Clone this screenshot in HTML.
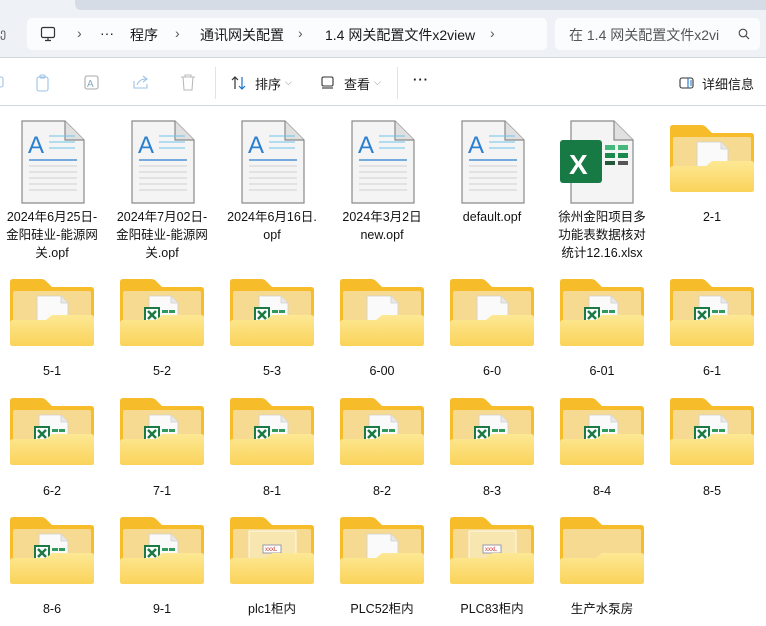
<!DOCTYPE html>
<html><head><meta charset="utf-8"><style>
*{margin:0;padding:0;box-sizing:border-box}
body{width:766px;height:626px;overflow:hidden;background:#fff;font-family:"Liberation Sans","Noto Sans CJK SC",sans-serif;color:#1a1a1a;position:relative}
#top{position:absolute;left:0;top:0;width:766px;height:58px;background:#eef2f7;border-bottom:1px solid #d3d8df}
#tab{position:absolute;left:75px;top:0;width:700px;height:10px;background:#d6dce6;border-bottom-left-radius:6px}
#addr{position:absolute;left:27px;top:18px;width:520px;height:32px;background:#fbfcfd;border-radius:5px;font-size:14px}
#addr span{position:absolute;top:7px}
#search{position:absolute;left:555px;top:18px;width:205px;height:32px;background:#fbfcfd;border-radius:5px;font-size:14px;color:#555}
#tb{position:absolute;left:0;top:59px;width:766px;height:47px;background:#fff;border-bottom:1px solid #d3d8df;font-size:13px}
#tb span{position:absolute;top:15px}
.sep{position:absolute;top:8px;width:1px;height:32px;background:#e3e3e3}
.it{position:absolute;width:100px;text-align:center;font-size:12.5px;line-height:18px;color:#111}
.ic{position:absolute}
</style></head><body>
<svg width="0" height="0" style="position:absolute">
<defs>
<linearGradient id="fg" x1="0" y1="0" x2="0" y2="1"><stop offset="0" stop-color="#fde894"/><stop offset="1" stop-color="#fad35a"/></linearGradient>
<symbol id="fb" viewBox="0 0 84 68">
<path d="M3,0 H31 Q34,0 36,2 L42,8 H81 Q84,8 84,11 V64 Q84,67 81,67 H3 Q0,67 0,64 V3 Q0,0 3,0Z" fill="#f6bc2a"/>
<rect x="3" y="12" width="78" height="52" rx="2" fill="#f7da92"/>
</symbol>
<symbol id="ff" viewBox="0 0 84 68">
<path d="M0,44 Q0,41 3,41 H36 L42,36 H81 Q84,36 84,39 V64 Q84,67 81,67 H3 Q0,67 0,64Z" fill="url(#fg)"/>
</symbol>
<symbol id="pp" viewBox="0 0 84 68">
<path d="M27,17 H51 L58,24 V45 H27Z" fill="#fafafa" stroke="#cfcfcf" stroke-width="0.8"/>
<path d="M51,17 V24 H58" fill="#e8e8e8" stroke="#cfcfcf" stroke-width="0.8"/>
</symbol>
<symbol id="px" viewBox="0 0 84 68">
<path d="M29,17 H51 L58,24 V45 H29Z" fill="#fafafa" stroke="#cfcfcf" stroke-width="0.8"/>
<path d="M51,17 V24 H58" fill="#e8e8e8" stroke="#cfcfcf" stroke-width="0.8"/>
<rect x="24" y="28" width="16" height="16" fill="#1d7a45"/><rect x="26" y="30" width="12" height="12" fill="#fff"/>
<path d="M28,32 L36,40 M36,32 L28,40" stroke="#1d7a45" stroke-width="2.5"/>
<rect x="42" y="31" width="6" height="3" fill="#2e9a5c"/><rect x="49" y="31" width="6" height="3" fill="#2e9a5c"/>
</symbol>
<symbol id="doc" viewBox="0 0 64 84">
<path d="M1,1 H44 L63,20 V83 H1Z" fill="#f4f4f4" stroke="#8a8a8a" stroke-width="1.2"/>
<path d="M44,1 V20 H63" fill="#e0e0e0" stroke="#8a8a8a" stroke-width="1.2"/>
<text x="7" y="33" font-family="Liberation Sans,sans-serif" font-size="24" fill="#2a7fcf">A</text>
<path d="M28,16 H54 M28,22 H54 M28,28 H54" stroke="#6ec3ea" stroke-width="1"/>
<path d="M8,40 H56" stroke="#2a7fcf" stroke-width="1.3"/>
<path d="M8,46 H56 M8,52 H56 M8,58 H56 M8,64 H56 M8,70 H56" stroke="#d0d0d0" stroke-width="1"/>
</symbol>
</defs></svg>

<div id="top"><div id="tab"></div>
<div style="position:absolute;left:0;top:26px;font-size:12px;color:#555">ე</div>
<div id="addr">
<svg style="position:absolute;left:13px;top:8px" width="16" height="16" viewBox="0 0 16 16"><rect x="1.5" y="1.5" width="13" height="10" rx="1.5" fill="none" stroke="#333" stroke-width="1.2"/><path d="M5,14.5 H11 M8,11.5 V14.5" stroke="#333" stroke-width="1.2"/></svg>
<span style="left:50px;color:#555">›</span><span style="left:73px">···</span>
<span style="left:103px">程序</span><span style="left:148px;color:#555">›</span>
<span style="left:173px">通讯网关配置</span><span style="left:271px;color:#555">›</span>
<span style="left:298px">1.4 网关配置文件x2view</span><span style="left:463px;color:#555">›</span>
</div>
<div id="search"><span style="position:absolute;left:14px;top:7px">在 1.4 网关配置文件x2vi</span>
<svg style="position:absolute;left:183px;top:10px" width="12" height="12" viewBox="0 0 12 12"><circle cx="5" cy="5" r="3.8" fill="none" stroke="#444" stroke-width="1.1"/><path d="M8,8 L11,11" stroke="#444" stroke-width="1.2"/></svg></div>
</div>

<div id="tb">
<svg style="position:absolute;left:0;top:14px" width="200" height="20" viewBox="0 0 200 20" fill="none" stroke="#9ec3e6" stroke-width="1.1">
<rect x="-6" y="4" width="9" height="10" rx="2"/>
<rect x="37" y="4" width="11" height="14" rx="2"/><rect x="40" y="2" width="5" height="3" rx="1"/>
<rect x="85" y="3" width="13" height="13" rx="2" stroke="#aaa"/><text x="87" y="14" font-size="10" fill="#8ab" stroke="none">A</text>
<path d="M134,8 V15 H147 V11 M137,12 Q139,6 146,6 M143,3 L147,6 L143,9"/>
<path d="M181,4 H195 M185,4 V2 H191 V4 M183,4 L184,17 H192 L193,4" stroke="#bbb"/>
</svg>
<div class="sep" style="left:215px"></div>
<svg style="position:absolute;left:231px;top:17px" width="16" height="14" viewBox="0 0 16 14" fill="none" stroke-width="1.2"><path d="M4,13 V1 M1,4 L4,1 L7,4" stroke="#333"/><path d="M11,1 V13 M8,10 L11,13 L14,10" stroke="#1a73c8"/></svg>
<span style="left:255px">排序</span><span style="left:285px;color:#888;font-size:9px;top:18px">⌵</span>
<svg style="position:absolute;left:321px;top:17px" width="13" height="13" viewBox="0 0 13 13" fill="none" stroke="#333" stroke-width="1.1"><rect x="1" y="1" width="11" height="9" rx="1.5"/><path d="M1,12 H12"/></svg>
<span style="left:344px">查看</span><span style="left:374px;color:#888;font-size:9px;top:18px">⌵</span>
<div class="sep" style="left:397px"></div>
<span style="left:413px;font-weight:bold;letter-spacing:1px;top:13px">···</span>
<svg style="position:absolute;left:679px;top:18px" width="15" height="12" viewBox="0 0 15 12" fill="none" stroke-width="1.1"><rect x="1" y="1" width="13" height="10" rx="2" stroke="#333"/><path d="M9,1 V11 M11,4 H13 M11,6 H13 M11,8 H13" stroke="#1a73c8"/></svg>
<span style="left:702px">详细信息</span>
</div>

<svg class="ic" style="left:21px;top:120px" width="64" height="84"><use href="#doc"/></svg>
<svg class="ic" style="left:131px;top:120px" width="64" height="84"><use href="#doc"/></svg>
<svg class="ic" style="left:241px;top:120px" width="64" height="84"><use href="#doc"/></svg>
<svg class="ic" style="left:351px;top:120px" width="64" height="84"><use href="#doc"/></svg>
<svg class="ic" style="left:461px;top:120px" width="64" height="84"><use href="#doc"/></svg>
<svg class="ic" style="left:560px;top:120px" width="76" height="84" viewBox="0 0 76 84">
<path d="M11,1 H54 L73,20 V83 H11Z" fill="#f4f4f4" stroke="#8a8a8a" stroke-width="1.2"/><path d="M54,1 V20 H73" fill="#e0e0e0" stroke="#8a8a8a" stroke-width="1.2"/>
<rect x="0" y="20" width="42" height="43" rx="3" fill="#177a44"/>
<text x="9" y="54" font-family="Liberation Sans,sans-serif" font-weight="bold" font-size="28" fill="#fff">X</text>
<rect x="45" y="25" width="10" height="5" fill="#45b97c"/><rect x="58" y="25" width="10" height="5" fill="#45b97c"/>
<rect x="45" y="33" width="10" height="5" fill="#1a8a4c"/><rect x="58" y="33" width="10" height="5" fill="#1a8a4c"/>
<rect x="45" y="41" width="10" height="4" fill="#24583a"/><rect x="58" y="41" width="10" height="4" fill="#555"/>
</svg>
<svg class="ic" style="left:670px;top:125px" width="84" height="68" viewBox="0 0 84 68"><use href="#fb"/><use href="#pp"/><use href="#ff"/></svg>

<div class="it" style="left:2px;top:208px">2024年6月25日-<br>金阳硅业-能源网<br>关.opf</div>
<div class="it" style="left:112px;top:208px">2024年7月02日-<br>金阳硅业-能源网<br>关.opf</div>
<div class="it" style="left:222px;top:208px">2024年6月16日.<br>opf</div>
<div class="it" style="left:332px;top:208px">2024年3月2日<br>new.opf</div>
<div class="it" style="left:442px;top:208px">default.opf</div>
<div class="it" style="left:552px;top:208px">徐州金阳项目多<br>功能表数据核对<br>统计12.16.xlsx</div>
<div class="it" style="left:662px;top:208px">2-1</div>

<svg class="ic" style="left:10px;top:279px" width="84" height="68"><use href="#fb"/><use href="#pp"/><use href="#ff"/></svg>
<svg class="ic" style="left:120px;top:279px" width="84" height="68"><use href="#fb"/><use href="#px"/><use href="#ff"/></svg>
<svg class="ic" style="left:230px;top:279px" width="84" height="68"><use href="#fb"/><use href="#px"/><use href="#ff"/></svg>
<svg class="ic" style="left:340px;top:279px" width="84" height="68"><use href="#fb"/><use href="#pp"/><use href="#ff"/></svg>
<svg class="ic" style="left:450px;top:279px" width="84" height="68"><use href="#fb"/><use href="#pp"/><use href="#ff"/></svg>
<svg class="ic" style="left:560px;top:279px" width="84" height="68"><use href="#fb"/><use href="#px"/><use href="#ff"/></svg>
<svg class="ic" style="left:670px;top:279px" width="84" height="68"><use href="#fb"/><use href="#px"/><use href="#ff"/></svg>
<div class="it" style="left:2px;top:362px">5-1</div>
<div class="it" style="left:112px;top:362px">5-2</div>
<div class="it" style="left:222px;top:362px">5-3</div>
<div class="it" style="left:332px;top:362px">6-00</div>
<div class="it" style="left:442px;top:362px">6-0</div>
<div class="it" style="left:552px;top:362px">6-01</div>
<div class="it" style="left:662px;top:362px">6-1</div>

<svg class="ic" style="left:10px;top:398px" width="84" height="68"><use href="#fb"/><use href="#px"/><use href="#ff"/></svg>
<svg class="ic" style="left:120px;top:398px" width="84" height="68"><use href="#fb"/><use href="#px"/><use href="#ff"/></svg>
<svg class="ic" style="left:230px;top:398px" width="84" height="68"><use href="#fb"/><use href="#px"/><use href="#ff"/></svg>
<svg class="ic" style="left:340px;top:398px" width="84" height="68"><use href="#fb"/><use href="#px"/><use href="#ff"/></svg>
<svg class="ic" style="left:450px;top:398px" width="84" height="68"><use href="#fb"/><use href="#px"/><use href="#ff"/></svg>
<svg class="ic" style="left:560px;top:398px" width="84" height="68"><use href="#fb"/><use href="#px"/><use href="#ff"/></svg>
<svg class="ic" style="left:670px;top:398px" width="84" height="68"><use href="#fb"/><use href="#px"/><use href="#ff"/></svg>
<div class="it" style="left:2px;top:482px">6-2</div>
<div class="it" style="left:112px;top:482px">7-1</div>
<div class="it" style="left:222px;top:482px">8-1</div>
<div class="it" style="left:332px;top:482px">8-2</div>
<div class="it" style="left:442px;top:482px">8-3</div>
<div class="it" style="left:552px;top:482px">8-4</div>
<div class="it" style="left:662px;top:482px">8-5</div>

<svg class="ic" style="left:10px;top:517px" width="84" height="68"><use href="#fb"/><use href="#px"/><use href="#ff"/></svg>
<svg class="ic" style="left:120px;top:517px" width="84" height="68"><use href="#fb"/><use href="#px"/><use href="#ff"/></svg>
<svg class="ic" style="left:230px;top:517px" width="84" height="68" viewBox="0 0 84 68"><use href="#fb"/><rect x="19" y="14" width="47" height="30" fill="#f8e6b0" stroke="#fff" stroke-width="0.8"/><rect x="33" y="28" width="18" height="8" fill="#fff" stroke="#99a"/><text x="35" y="34" font-size="6" fill="#c33">xxxL</text><use href="#ff"/></svg>
<svg class="ic" style="left:340px;top:517px" width="84" height="68"><use href="#fb"/><use href="#pp"/><use href="#ff"/></svg>
<svg class="ic" style="left:450px;top:517px" width="84" height="68" viewBox="0 0 84 68"><use href="#fb"/><rect x="19" y="14" width="47" height="30" fill="#f8e6b0" stroke="#fff" stroke-width="0.8"/><rect x="33" y="28" width="18" height="8" fill="#fff" stroke="#99a"/><text x="35" y="34" font-size="6" fill="#c33">xxxL</text><use href="#ff"/></svg>
<svg class="ic" style="left:560px;top:517px" width="84" height="68"><use href="#fb"/><use href="#ff"/></svg>
<div class="it" style="left:2px;top:600px">8-6</div>
<div class="it" style="left:112px;top:600px">9-1</div>
<div class="it" style="left:222px;top:600px">plc1柜内</div>
<div class="it" style="left:332px;top:600px">PLC52柜内</div>
<div class="it" style="left:442px;top:600px">PLC83柜内</div>
<div class="it" style="left:552px;top:600px">生产水泵房</div>
</body></html>
